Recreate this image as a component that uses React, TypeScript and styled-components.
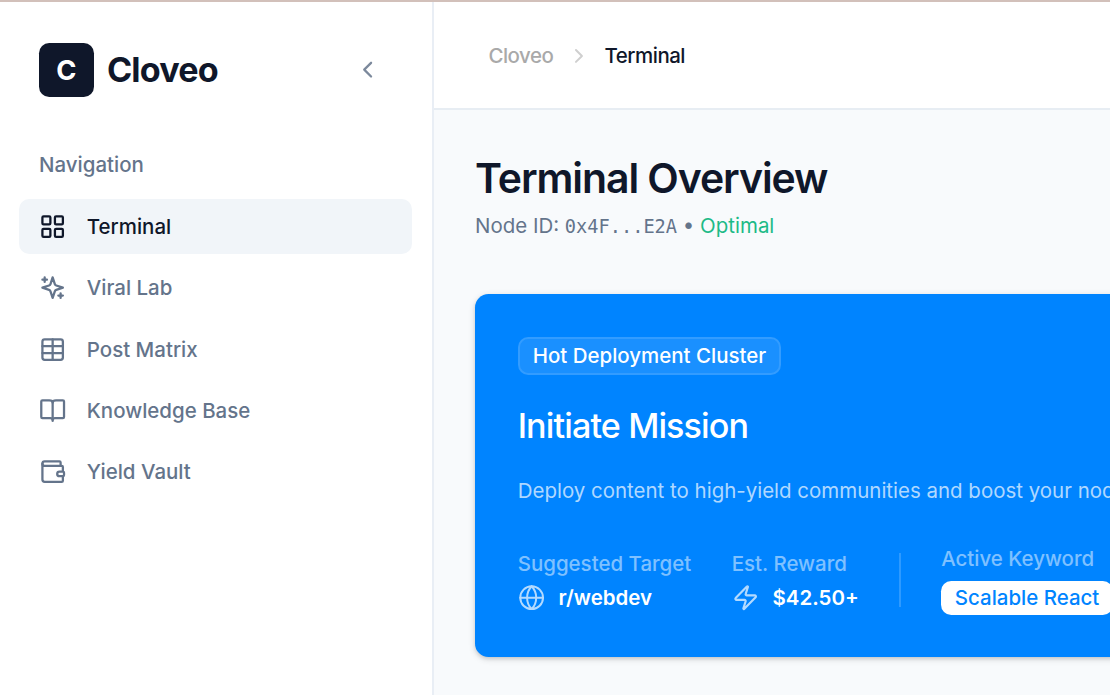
import React from 'react';
import styled, { createGlobalStyle, css } from 'styled-components';

const GlobalStyle = createGlobalStyle`
  * { box-sizing: border-box; }
  html, body { margin: 0; padding: 0; overflow: hidden; background: #f8fafc; }
  body { font-family: Inter, 'Liberation Sans', sans-serif; font-size: 20.48px; line-height: 27.3px; color: #0f172a; }
  h1, h2, p { margin: 0; }
`;

const Page = styled.div`
  display: flex;
  width: 1110px;
  height: 695px;
  overflow: hidden;
  border-top: 2px solid #d2c0ba;
`;

const Sidebar = styled.aside`
  flex: none;
  width: 434px;
  background: #fff;
  border-right: 2px solid #e9eef5;
  padding: 40.5px 20.2px 0 19px;
`;

const BrandRow = styled.div`
  display: flex;
  align-items: center;
  padding: 0 30.5px 0 20px;
  height: 54.6px;
`;

const LogoTile = styled.div`
  display: grid;
  place-items: center;
  width: 54.6px;
  height: 54.6px;
  padding-top: 1px;
  border-radius: 10.2px;
  background: #0f172a;
  color: #fff;
  font-size: 27.3px;
  font-weight: 700;
`;

const BrandName = styled.span`
  margin-left: 13.4px;
  font-size: 34.13px;
  font-weight: 700;
  letter-spacing: -0.025em;
  line-height: 47.8px;
`;

const CollapseButton = styled.button`
  display: flex;
  margin-left: auto;
  padding: 0;
  border: 0;
  background: none;
  color: #7c899c;
`;

const SectionLabel = styled.div`
  margin: 54px 0 20.7px 20px;
  color: #64748b;
  font-weight: 500;
`;

const NavList = styled.nav`
  display: flex;
  flex-direction: column;
  gap: 6.8px;
`;

const NavItem = styled.a<{ $active?: boolean }>`
  display: flex;
  align-items: center;
  gap: 20.5px;
  height: 54.6px;
  padding: 0 20px;
  border-radius: 10.2px;
  font-weight: 500;
  color: ${({ $active }) => ($active ? '#0f172a' : '#64748b')};
  background: ${({ $active }) => ($active ? '#f1f5f9' : 'transparent')};
`;

const Main = styled.main`
  flex: 1;
  min-width: 0;
`;

const TopBar = styled.header`
  display: flex;
  align-items: center;
  gap: 13.6px;
  height: 108px;
  padding: 2px 0 0 54.4px;
  background: #fff;
  border-bottom: 2px solid #e7edf3;
`;

const Crumb = styled.span<{ $current?: boolean }>`
  font-weight: 500;
  letter-spacing: -0.0235em;
  color: ${({ $current }) => ($current ? '#0f172a' : '#a9a9a9')};
`;

const CrumbIcon = styled.span`
  display: flex;
  color: #cfcfcf;
`;

const Content = styled.div`
  padding: 40.8px 0 0 41px;
`;

const Heading = styled.h1`
  font-size: 40.96px;
  line-height: 54.6px;
  font-weight: 600;
  letter-spacing: -0.026em;
`;

const NodeLine = styled.p`
  margin-top: 7px;
  height: 27.3px;
  color: #64748b;
`;

const Mono = styled.span`
  font-family: 'DejaVu Sans Mono', 'Liberation Mono', monospace;
  font-size: 18.65px;
`;

const Status = styled.span`
  color: #1dba87;
`;

const MissionCard = styled.section`
  width: 760px;
  height: 363px;
  margin-top: 54.8px;
  padding: 42.7px;
  border-radius: 13.6px;
  background: #0084ff;
  color: #fff;
  box-shadow: 0 2px 7px rgba(0, 0, 0, 0.14), 0 2px 4px -1.7px rgba(0, 0, 0, 0.14);
`;

const Badge = styled.span`
  display: inline-flex;
  align-items: center;
  height: 37.5px;
  padding: 0 13px;
  border: 2px solid rgba(255, 255, 255, 0.2);
  border-radius: 10.2px;
  background: rgba(255, 255, 255, 0.1);
  background-clip: padding-box;
  font-weight: 500;
  vertical-align: top;
`;

const MissionTitle = styled.h2`
  margin-top: 27.3px;
  font-size: 34.13px;
  line-height: 47.8px;
  font-weight: 500;
  letter-spacing: -0.026em;
`;

const MissionText = styled.p`
  margin-top: 27.3px;
  white-space: nowrap;
  color: rgba(255, 255, 255, 0.7);
`;

const Stats = styled.div`
  display: flex;
  align-items: center;
  gap: 40.4px;
  margin-top: 40.8px;
`;

const Stat = styled.div<{ $pill?: boolean }>`
  display: flex;
  flex-direction: column;
  align-items: flex-start;
  flex: none;
  gap: ${({ $pill }) => ($pill ? '8.5px' : '6.8px')};
  padding-top: ${({ $pill }) => ($pill ? '0' : '1px')};
`;

const StatLabel = styled.span`
  font-weight: 500;
  color: rgba(255, 255, 255, 0.5);
`;

const StatValue = styled.span`
  display: flex;
  align-items: center;
  gap: 13.6px;
  font-weight: 600;
  svg { opacity: 0.7; }
`;

const Divider = styled.span`
  flex: none;
  width: 1.7px;
  height: 54.6px;
  background: rgba(255, 255, 255, 0.18);
`;

const Pill = styled.span`
  height: 34px;
  padding: 0 13.6px;
  border-radius: 10.2px;
  background: #fff;
  color: #0084ff;
  font-weight: 500;
  line-height: 34px;
`;

const strokeBase = css`
  display: block;
  flex: none;
  fill: none;
  stroke: currentColor;
  stroke-linecap: round;
  stroke-linejoin: round;
`;

const Svg = styled.svg`
  ${strokeBase}
`;

type IconProps = { size?: number; weight?: number; children: React.ReactNode };

const Icon = ({ size = 27.3, weight = 2, children }: IconProps) => (
  <Svg width={size} height={size} viewBox="0 0 24 24" strokeWidth={weight}>
    {children}
  </Svg>
);

const navItems = [
  {
    label: 'Terminal',
    icon: (
      <>
        <rect width="7" height="7" x="3" y="3" rx="1" />
        <rect width="7" height="7" x="14" y="3" rx="1" />
        <rect width="7" height="7" x="14" y="14" rx="1" />
        <rect width="7" height="7" x="3" y="14" rx="1" />
      </>
    ),
  },
  {
    label: 'Viral Lab',
    icon: (
      <>
        <path d="m12 3-1.912 5.813a2 2 0 0 1-1.275 1.275L3 12l5.813 1.912a2 2 0 0 1 1.275 1.275L12 21l1.912-5.813a2 2 0 0 1 1.275-1.275L21 12l-5.813-1.912a2 2 0 0 1-1.275-1.275L12 3Z" />
        <path d="M5 3v4M19 17v4M3 5h4M17 19h4" />
      </>
    ),
  },
  {
    label: 'Post Matrix',
    icon: (
      <>
        <path d="M12 3v18M3 9h18M3 15h18" />
        <rect width="18" height="18" x="3" y="3" rx="2" />
      </>
    ),
  },
  {
    label: 'Knowledge Base',
    icon: (
      <>
        <path d="M12 5v16" />
        <path d="M3 18.5a1 1 0 0 1-1-1V4a1 1 0 0 1 1-1h6a3 2 0 0 1 3 2 3 2 0 0 1 3-2h6a1 1 0 0 1 1 1v13.5a1 1 0 0 1-1 1h-7a2 1.5 0 0 0-2 1.5 2 1.5 0 0 0-2-1.5z" />
      </>
    ),
  },
  {
    label: 'Yield Vault',
    icon: (
      <>
        <path d="M19 7V4a1 1 0 0 0-1-1H5a2 2 0 0 0 0 4h15a1 1 0 0 1 1 1v4h-3a2 2 0 0 0 0 4h3a1 1 0 0 0 1-1v-2a1 1 0 0 0-1-1" />
        <path d="M3 5v14a2 2 0 0 0 2 2h15a1 1 0 0 0 1-1v-4" />
      </>
    ),
  },
];

export default function App() {
  return (
    <>
      <GlobalStyle />
      <Page>
        <Sidebar>
          <BrandRow>
            <LogoTile>C</LogoTile>
            <BrandName>Cloveo</BrandName>
            <CollapseButton aria-label="Collapse sidebar">
              <Icon><path d="m15 18-6-6 6-6" /></Icon>
            </CollapseButton>
          </BrandRow>
          <SectionLabel>Navigation</SectionLabel>
          <NavList>
            {navItems.map((item, i) => (
              <NavItem key={item.label} $active={i === 0}>
                <Icon>{item.icon}</Icon>
                {item.label}
              </NavItem>
            ))}
          </NavList>
        </Sidebar>
        <Main>
          <TopBar>
            <Crumb>Cloveo</Crumb>
            <CrumbIcon>
              <Icon size={23.9}><path d="m9 18 6-6-6-6" /></Icon>
            </CrumbIcon>
            <Crumb $current>Terminal</Crumb>
          </TopBar>
          <Content>
            <Heading>Terminal Overview</Heading>
            <NodeLine>
              Node ID: <Mono>0x4F...E2A</Mono> • <Status>Optimal</Status>
            </NodeLine>
            <MissionCard>
              <Badge>Hot Deployment Cluster</Badge>
              <MissionTitle>Initiate Mission</MissionTitle>
              <MissionText>
                Deploy content to high-yield communities and boost your node
              </MissionText>
              <Stats>
                <Stat>
                  <StatLabel>Suggested Target</StatLabel>
                  <StatValue>
                    <Icon weight={1.75}>
                      <circle cx="12" cy="12" r="10" />
                      <path d="M12 2a14.5 14.5 0 0 0 0 20 14.5 14.5 0 0 0 0-20" />
                      <path d="M2 12h20" />
                    </Icon>
                    r/webdev
                  </StatValue>
                </Stat>
                <Stat>
                  <StatLabel>Est. Reward</StatLabel>
                  <StatValue>
                    <Icon weight={1.9}>
                      <path d="M4 14a1 1 0 0 1-.78-1.63l9.9-10.2a.5.5 0 0 1 .86.46l-1.92 6.02A1 1 0 0 0 13 10h7a1 1 0 0 1 .78 1.63l-9.9 10.2a.5.5 0 0 1-.86-.46l1.92-6.02A1 1 0 0 0 11 14z" />
                    </Icon>
                    $42.50+
                  </StatValue>
                </Stat>
                <Divider />
                <Stat $pill>
                  <StatLabel>Active Keyword</StatLabel>
                  <Pill>Scalable React</Pill>
                </Stat>
              </Stats>
            </MissionCard>
          </Content>
        </Main>
      </Page>
    </>
  );
}
